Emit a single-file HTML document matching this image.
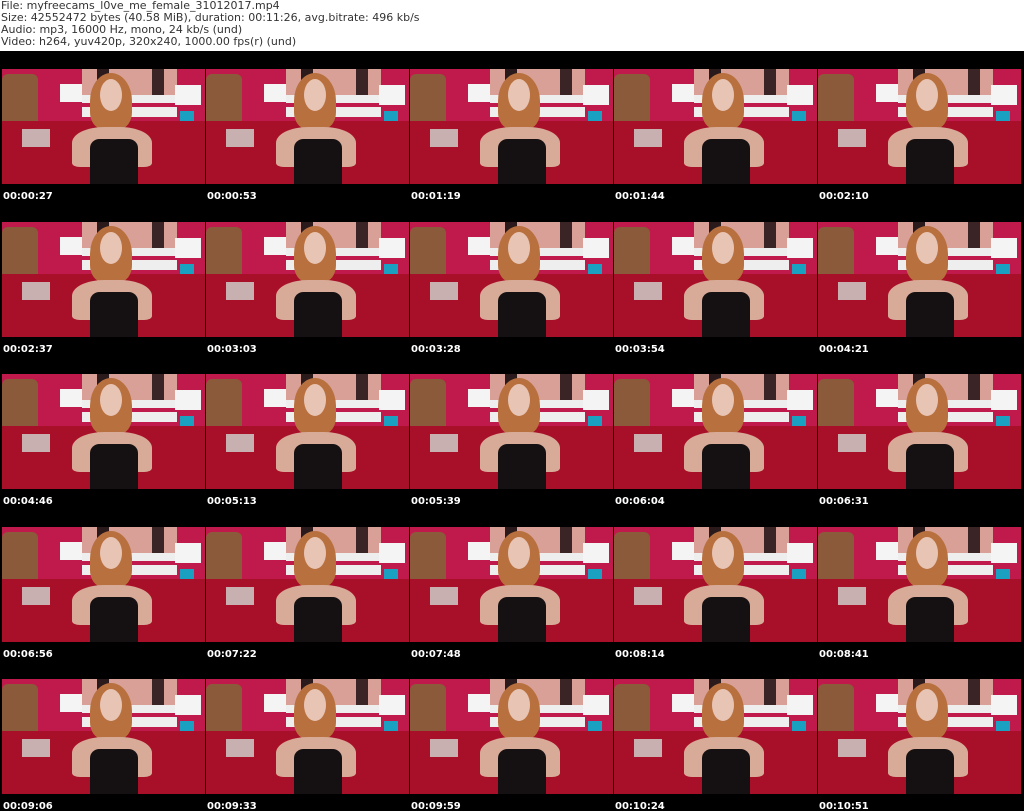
<!DOCTYPE html>
<html><head><style>
body{margin:0;width:1024px;height:811px;background:#fff;overflow:hidden;font-family:"DejaVu Sans","Liberation Sans",sans-serif;}
.hdr{position:absolute;left:1px;top:0;font-size:11px;line-height:12px;color:#333;white-space:pre;}
.blk{position:absolute;left:0;top:51px;width:1024px;height:760px;background:#000;}
.t{position:absolute;width:203px;height:115px;overflow:hidden;background:#c01a4c;}
.t div{position:absolute;}
.ts{position:absolute;color:#fff;font-weight:bold;font-size:10px;font-family:"DejaVu Sans",sans-serif;}
</style></head><body>
<div class="hdr">File: myfreecams_l0ve_me_female_31012017.mp4
Size: 42552472 bytes (40.58 MiB), duration: 00:11:26, avg.bitrate: 496 kb/s
Audio: mp3, 16000 Hz, mono, 24 kb/s (und)
Video: h264, yuv420p, 320x240, 1000.00 fps(r) (und)</div>
<div class="blk"></div>
<div id="g"></div>
<script>
var ts=["00:00:27","00:00:53","00:01:19","00:01:44","00:02:10","00:02:37","00:03:03","00:03:28","00:03:54","00:04:21","00:04:46","00:05:13","00:05:39","00:06:04","00:06:31","00:06:56","00:07:22","00:07:48","00:08:14","00:08:41","00:09:06","00:09:33","00:09:59","00:10:24","00:10:51"];
var inner='<div style="left:80px;top:0;width:95px;height:26px;background:#d8a096"></div>'+
'<div style="left:95px;top:0;width:12px;height:26px;background:#2a1a1c"></div>'+
'<div style="left:150px;top:0;width:12px;height:26px;background:#3a2426"></div>'+
'<div style="left:80px;top:26px;width:95px;height:22px;background:#eee"></div>'+
'<div style="left:80px;top:34px;width:95px;height:4px;background:#c01a4c"></div>'+
'<div style="left:0;top:5px;width:36px;height:60px;background:#8a5a3a;border-radius:6px"></div>'+
'<div style="left:58px;top:15px;width:22px;height:18px;background:#f4f4f4"></div>'+
'<div style="left:173px;top:16px;width:26px;height:20px;background:#f4f4f4"></div>'+
'<div style="left:178px;top:42px;width:14px;height:14px;background:#1aa0c0"></div>'+
'<div style="left:0;top:52px;width:203px;height:63px;background:#a80f28"></div>'+
'<div style="left:20px;top:60px;width:28px;height:18px;background:#c8b0b0"></div>'+
'<div style="left:88px;top:4px;width:42px;height:56px;background:#b8703e;border-radius:50% 50% 30% 30%"></div>'+
'<div style="left:98px;top:10px;width:22px;height:32px;background:#e8c4b4;border-radius:50%"></div>'+
'<div style="left:70px;top:58px;width:80px;height:40px;background:#d8aa98;border-radius:40% 40% 10% 10%"></div>'+
'<div style="left:88px;top:70px;width:48px;height:45px;background:#151012;border-radius:20% 20% 0 0"></div>';
var h='';
for(var i=0;i<25;i++){var r=Math.floor(i/5),c=i%5;var x=2+c*204,y=69+r*152.5;
h+='<div class="t" style="left:'+x+'px;top:'+y+'px">'+inner+'</div><div class="ts" style="left:'+(x+1)+'px;top:'+(y+122)+'px">'+ts[i]+'</div>';}
document.getElementById('g').innerHTML=h;
</script>
</body></html>
